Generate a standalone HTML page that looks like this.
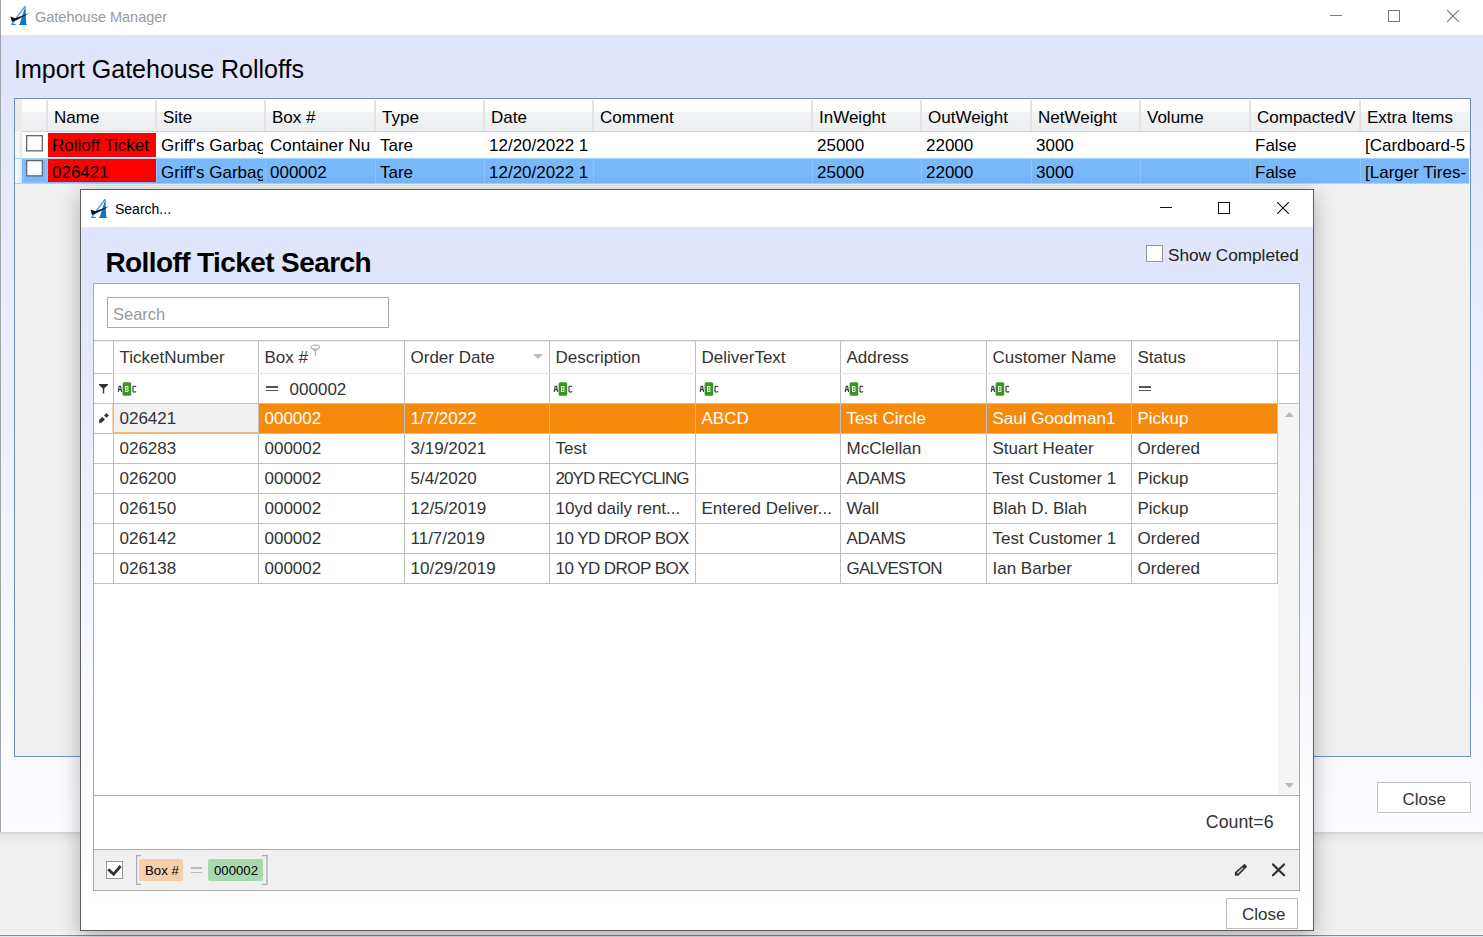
<!DOCTYPE html>
<html><head><meta charset="utf-8"><style>
html,body{margin:0;padding:0;width:1483px;height:937px;overflow:hidden;font-family:"Liberation Sans", sans-serif;}
div{box-sizing:content-box}
</style></head><body>
<div style="position:absolute;left:0;top:0;width:1483px;height:937px;background:#f0f0f0;overflow:hidden"><div style="position:absolute;left:0px;top:934px;width:1483px;height:1px;background:#f8f6f2"></div><div style="position:absolute;left:0px;top:935px;width:1483px;height:1px;background:#6e8db5"></div><div style="position:absolute;left:0px;top:936px;width:1483px;height:1px;background:#dce8f8"></div><div style="position:absolute;left:0px;top:832px;width:1483px;height:12px;background:linear-gradient(#d2d2d2,#e6e6e6 30%,#f0f0f0)"></div><div style="position:absolute;left:0px;top:0px;width:1483px;height:832px;background:linear-gradient(#e0e5fb 0px, #e0e5fb 60px, #fdfdff 832px);"></div><div style="position:absolute;left:0px;top:0px;width:1483px;height:35px;background:#fff"></div><div style="position:absolute;left:0px;top:0px;width:1px;height:832px;background:#a0a4aa"></div><svg style="position:absolute;left:0px;top:0px;overflow:visible" width="32" height="30" viewBox="0 0 32 30">
<path d="M25.4 5.8 L26.2 23.6 L27.3 24.9 L18.6 24.9 L19.9 23.6 Z" fill="#0b78d0"/>
<path d="M25.2 6.2 L11.8 24.2" stroke="#3a9ae0" stroke-width="1.3" fill="none"/>
<path d="M10.6 24.9 L16.2 24.9 L15.4 23.7 L11.9 23.7 Z" fill="#2a8ad8"/>
<path d="M10.4 16.6 L15.2 18.2 L29.6 12.9 L17.5 19.8 L12 21.9 Z" fill="#111"/>
</svg><div style="position:absolute;left:35px;top:9.53px;font-size:14.5px;line-height:14.5px;color:#999;font-weight:400;white-space:nowrap;">Gatehouse Manager</div><div style="position:absolute;left:1330px;top:15px;width:12px;height:1px;background:#777"></div><div style="position:absolute;left:1388px;top:10px;width:12px;height:12px;border:1px solid #777;box-sizing:border-box"></div><svg style="position:absolute;left:1447px;top:10px" width="12" height="12"><path d="M0 0L12 12M12 0L0 12" stroke="#777" stroke-width="1.1"/></svg><div style="position:absolute;left:14px;top:56.64px;font-size:25px;line-height:25px;color:#000;font-weight:400;white-space:nowrap;">Import Gatehouse Rolloffs</div><div style="position:absolute;left:14px;top:98px;width:1457px;height:659px;border:1px solid #6f8fb8;box-sizing:border-box;background:#f0f0f0"></div><div style="position:absolute;left:15px;top:99px;width:1455px;height:32px;background:linear-gradient(#fff 0px,#fff 13px,#f2f3f5 13px,#eceef0 32px)"></div><div style="position:absolute;left:22px;top:131px;width:1448px;height:1px;background:#d0d0d0"></div><div style="position:absolute;left:15px;top:99px;width:7px;height:32px;background:#ececec"></div><div style="position:absolute;left:46px;top:100px;width:2px;height:31px;background:linear-gradient(90deg,#e8e8ea,#dcdcde)"></div><div style="position:absolute;left:155px;top:100px;width:2px;height:31px;background:linear-gradient(90deg,#e8e8ea,#dcdcde)"></div><div style="position:absolute;left:264px;top:100px;width:2px;height:31px;background:linear-gradient(90deg,#e8e8ea,#dcdcde)"></div><div style="position:absolute;left:374px;top:100px;width:2px;height:31px;background:linear-gradient(90deg,#e8e8ea,#dcdcde)"></div><div style="position:absolute;left:483px;top:100px;width:2px;height:31px;background:linear-gradient(90deg,#e8e8ea,#dcdcde)"></div><div style="position:absolute;left:592px;top:100px;width:2px;height:31px;background:linear-gradient(90deg,#e8e8ea,#dcdcde)"></div><div style="position:absolute;left:811px;top:100px;width:2px;height:31px;background:linear-gradient(90deg,#e8e8ea,#dcdcde)"></div><div style="position:absolute;left:920px;top:100px;width:2px;height:31px;background:linear-gradient(90deg,#e8e8ea,#dcdcde)"></div><div style="position:absolute;left:1030px;top:100px;width:2px;height:31px;background:linear-gradient(90deg,#e8e8ea,#dcdcde)"></div><div style="position:absolute;left:1139px;top:100px;width:2px;height:31px;background:linear-gradient(90deg,#e8e8ea,#dcdcde)"></div><div style="position:absolute;left:1249px;top:100px;width:2px;height:31px;background:linear-gradient(90deg,#e8e8ea,#dcdcde)"></div><div style="position:absolute;left:1359px;top:100px;width:2px;height:31px;background:linear-gradient(90deg,#e8e8ea,#dcdcde)"></div><div style="position:absolute;left:54px;top:108.61px;font-size:17px;line-height:17px;color:#000;font-weight:400;white-space:nowrap;width:101px;overflow:hidden;">Name</div><div style="position:absolute;left:163px;top:108.61px;font-size:17px;line-height:17px;color:#000;font-weight:400;white-space:nowrap;width:101px;overflow:hidden;">Site</div><div style="position:absolute;left:272px;top:108.61px;font-size:17px;line-height:17px;color:#000;font-weight:400;white-space:nowrap;width:102px;overflow:hidden;">Box #</div><div style="position:absolute;left:382px;top:108.61px;font-size:17px;line-height:17px;color:#000;font-weight:400;white-space:nowrap;width:101px;overflow:hidden;">Type</div><div style="position:absolute;left:491px;top:108.61px;font-size:17px;line-height:17px;color:#000;font-weight:400;white-space:nowrap;width:101px;overflow:hidden;">Date</div><div style="position:absolute;left:600px;top:108.61px;font-size:17px;line-height:17px;color:#000;font-weight:400;white-space:nowrap;width:211px;overflow:hidden;">Comment</div><div style="position:absolute;left:819px;top:108.61px;font-size:17px;line-height:17px;color:#000;font-weight:400;white-space:nowrap;width:101px;overflow:hidden;">InWeight</div><div style="position:absolute;left:928px;top:108.61px;font-size:17px;line-height:17px;color:#000;font-weight:400;white-space:nowrap;width:102px;overflow:hidden;">OutWeight</div><div style="position:absolute;left:1038px;top:108.61px;font-size:17px;line-height:17px;color:#000;font-weight:400;white-space:nowrap;width:101px;overflow:hidden;">NetWeight</div><div style="position:absolute;left:1147px;top:108.61px;font-size:17px;line-height:17px;color:#000;font-weight:400;white-space:nowrap;width:102px;overflow:hidden;">Volume</div><div style="position:absolute;left:1257px;top:108.61px;font-size:17px;line-height:17px;color:#000;font-weight:400;white-space:nowrap;width:102px;overflow:hidden;">CompactedV</div><div style="position:absolute;left:1367px;top:108.61px;font-size:17px;line-height:17px;color:#000;font-weight:400;white-space:nowrap;width:101px;overflow:hidden;">Extra Items</div><div style="position:absolute;left:15px;top:132px;width:1454px;height:26px;background:#fff"></div><div style="position:absolute;left:15px;top:132px;width:7px;height:26px;background:linear-gradient(90deg,#fafafa,#f2f2f2 70%,#e4e4e4)"></div><div style="position:absolute;left:48px;top:133px;width:108px;height:24px;background:#ff0000"></div><svg style="position:absolute;left:26px;top:135px" width="17" height="17"><rect x="0.65" y="0.65" width="15.7" height="15.2" fill="#fff" stroke="#666" stroke-width="1.3"/></svg><div style="position:absolute;left:52px;top:136.61px;font-size:17px;line-height:17px;color:#000;font-weight:400;white-space:nowrap;width:102px;overflow:hidden;">Rolloff Ticket</div><div style="position:absolute;left:161px;top:136.61px;font-size:17px;line-height:17px;color:#000;font-weight:400;white-space:nowrap;width:102px;overflow:hidden;">Griff's Garbage</div><div style="position:absolute;left:270px;top:136.61px;font-size:17px;line-height:17px;color:#000;font-weight:400;white-space:nowrap;width:103px;overflow:hidden;">Container Nu</div><div style="position:absolute;left:380px;top:136.61px;font-size:17px;line-height:17px;color:#000;font-weight:400;white-space:nowrap;width:102px;overflow:hidden;">Tare</div><div style="position:absolute;left:489px;top:136.61px;font-size:17px;line-height:17px;color:#000;font-weight:400;white-space:nowrap;width:102px;overflow:hidden;">12/20/2022 1</div><div style="position:absolute;left:817px;top:136.61px;font-size:17px;line-height:17px;color:#000;font-weight:400;white-space:nowrap;width:102px;overflow:hidden;">25000</div><div style="position:absolute;left:926px;top:136.61px;font-size:17px;line-height:17px;color:#000;font-weight:400;white-space:nowrap;width:103px;overflow:hidden;">22000</div><div style="position:absolute;left:1036px;top:136.61px;font-size:17px;line-height:17px;color:#000;font-weight:400;white-space:nowrap;width:102px;overflow:hidden;">3000</div><div style="position:absolute;left:1255px;top:136.61px;font-size:17px;line-height:17px;color:#000;font-weight:400;white-space:nowrap;width:103px;overflow:hidden;">False</div><div style="position:absolute;left:1365px;top:136.61px;font-size:17px;line-height:17px;color:#000;font-weight:400;white-space:nowrap;width:102px;overflow:hidden;">[Cardboard-5</div><div style="position:absolute;left:15px;top:158px;width:1454px;height:26px;background:#78b8fb"></div><div style="position:absolute;left:15px;top:158px;width:7px;height:26px;background:linear-gradient(90deg,#fafdff,#e6f2fb 70%,#cde6f8)"></div><div style="position:absolute;left:15px;top:158px;width:1454px;height:1px;background:#a6d2fb"></div><div style="position:absolute;left:15px;top:183px;width:1454px;height:1px;background:#a6d2fb"></div><div style="position:absolute;left:47px;top:159px;width:1px;height:24px;background:#8ec3fb"></div><div style="position:absolute;left:156px;top:159px;width:1px;height:24px;background:#8ec3fb"></div><div style="position:absolute;left:265px;top:159px;width:1px;height:24px;background:#8ec3fb"></div><div style="position:absolute;left:375px;top:159px;width:1px;height:24px;background:#8ec3fb"></div><div style="position:absolute;left:484px;top:159px;width:1px;height:24px;background:#8ec3fb"></div><div style="position:absolute;left:593px;top:159px;width:1px;height:24px;background:#8ec3fb"></div><div style="position:absolute;left:812px;top:159px;width:1px;height:24px;background:#8ec3fb"></div><div style="position:absolute;left:921px;top:159px;width:1px;height:24px;background:#8ec3fb"></div><div style="position:absolute;left:1031px;top:159px;width:1px;height:24px;background:#8ec3fb"></div><div style="position:absolute;left:1140px;top:159px;width:1px;height:24px;background:#8ec3fb"></div><div style="position:absolute;left:1250px;top:159px;width:1px;height:24px;background:#8ec3fb"></div><div style="position:absolute;left:1360px;top:159px;width:1px;height:24px;background:#8ec3fb"></div><div style="position:absolute;left:23px;top:159px;width:23px;height:24px;border:1px solid #8ec3fb;box-sizing:border-box"></div><div style="position:absolute;left:48px;top:159px;width:108px;height:23px;background:#ff0000"></div><svg style="position:absolute;left:26px;top:160px" width="17" height="17"><rect x="0.65" y="0.65" width="15.7" height="15.2" fill="#fff" stroke="#666" stroke-width="1.3"/></svg><div style="position:absolute;left:52px;top:163.61px;font-size:17px;line-height:17px;color:#000;font-weight:400;white-space:nowrap;width:102px;overflow:hidden;">026421</div><div style="position:absolute;left:161px;top:163.61px;font-size:17px;line-height:17px;color:#000;font-weight:400;white-space:nowrap;width:102px;overflow:hidden;">Griff's Garbage</div><div style="position:absolute;left:270px;top:163.61px;font-size:17px;line-height:17px;color:#000;font-weight:400;white-space:nowrap;width:103px;overflow:hidden;">000002</div><div style="position:absolute;left:380px;top:163.61px;font-size:17px;line-height:17px;color:#000;font-weight:400;white-space:nowrap;width:102px;overflow:hidden;">Tare</div><div style="position:absolute;left:489px;top:163.61px;font-size:17px;line-height:17px;color:#000;font-weight:400;white-space:nowrap;width:102px;overflow:hidden;">12/20/2022 1</div><div style="position:absolute;left:817px;top:163.61px;font-size:17px;line-height:17px;color:#000;font-weight:400;white-space:nowrap;width:102px;overflow:hidden;">25000</div><div style="position:absolute;left:926px;top:163.61px;font-size:17px;line-height:17px;color:#000;font-weight:400;white-space:nowrap;width:103px;overflow:hidden;">22000</div><div style="position:absolute;left:1036px;top:163.61px;font-size:17px;line-height:17px;color:#000;font-weight:400;white-space:nowrap;width:102px;overflow:hidden;">3000</div><div style="position:absolute;left:1255px;top:163.61px;font-size:17px;line-height:17px;color:#000;font-weight:400;white-space:nowrap;width:103px;overflow:hidden;">False</div><div style="position:absolute;left:1365px;top:163.61px;font-size:17px;line-height:17px;color:#000;font-weight:400;white-space:nowrap;width:102px;overflow:hidden;">[Larger Tires-</div><div style="position:absolute;left:1377px;top:782px;width:94px;height:31px;border:1px solid #c4c4c4;box-sizing:border-box;background:#fff"></div><div style="position:absolute;left:1402.5px;top:790.61px;font-size:17px;line-height:17px;color:#333;font-weight:400;white-space:nowrap;">Close</div><div style="position:absolute;left:68px;top:180px;width:1262px;height:766px;background:transparent;box-shadow:0 6px 20px rgba(0,0,0,0.28);left:80px;top:189px;width:1234px;height:742px"></div><div style="position:absolute;left:80px;top:189px;width:1234px;height:742px;border:1px solid #5c5c5c;box-sizing:border-box;background:linear-gradient(#e0e5fb 0px, #e0e5fb 80px, #fdfdff 600px, #fff 742px)"></div><div style="position:absolute;left:81px;top:190px;width:1232px;height:37px;background:#fff"></div><svg style="position:absolute;left:80px;top:193px;overflow:visible" width="32" height="30" viewBox="0 0 32 30">
<path d="M25.4 5.8 L26.2 23.6 L27.3 24.9 L18.6 24.9 L19.9 23.6 Z" fill="#0b78d0"/>
<path d="M25.2 6.2 L11.8 24.2" stroke="#3a9ae0" stroke-width="1.3" fill="none"/>
<path d="M10.6 24.9 L16.2 24.9 L15.4 23.7 L11.9 23.7 Z" fill="#2a8ad8"/>
<path d="M10.4 16.6 L15.2 18.2 L29.6 12.9 L17.5 19.8 L12 21.9 Z" fill="#111"/>
</svg><div style="position:absolute;left:115px;top:202.15px;font-size:14px;line-height:14px;color:#000;font-weight:400;white-space:nowrap;">Search...</div><div style="position:absolute;left:1160px;top:207px;width:12px;height:1px;background:#111"></div><div style="position:absolute;left:1218px;top:202px;width:12px;height:12px;border:1px solid #111;box-sizing:border-box"></div><svg style="position:absolute;left:1277px;top:202px" width="12" height="12"><path d="M0 0L12 12M12 0L0 12" stroke="#111" stroke-width="1.1"/></svg><div style="position:absolute;left:105.5px;top:249.30px;font-size:28px;line-height:28px;color:#000;font-weight:700;white-space:nowrap;letter-spacing:-0.6px;">Rolloff Ticket Search</div><div style="position:absolute;left:1146px;top:245px;width:17px;height:17px;border:1px solid #999;box-sizing:border-box;background:#fff"></div><div style="position:absolute;left:1168px;top:247.14px;font-size:17.2px;line-height:17.2px;color:#222;font-weight:400;white-space:nowrap;">Show Completed</div><div style="position:absolute;left:93px;top:283px;width:1207px;height:608px;border:1px solid #ababab;box-sizing:border-box;background:#fff"></div><div style="position:absolute;left:107px;top:297px;width:282px;height:31px;border:1px solid #ababab;box-sizing:border-box;background:#fff"></div><div style="position:absolute;left:113px;top:306.03px;font-size:16.5px;line-height:16.5px;color:#999;font-weight:400;white-space:nowrap;">Search</div><div style="position:absolute;left:94px;top:340px;width:1205px;height:1px;background:#c6c6c6"></div><div style="position:absolute;left:94px;top:341px;width:1205px;height:1px;background:#ececec"></div><div style="position:absolute;left:258px;top:404px;width:1019px;height:29px;background:#f58a0d"></div><div style="position:absolute;left:114px;top:404px;width:144px;height:29px;background:#f1f1f1"></div><div style="position:absolute;left:113px;top:341px;width:1px;height:242px;background:#bfbfbf"></div><div style="position:absolute;left:258px;top:341px;width:1px;height:242px;background:#bfbfbf"></div><div style="position:absolute;left:404px;top:341px;width:1px;height:242px;background:#bfbfbf"></div><div style="position:absolute;left:549px;top:341px;width:1px;height:242px;background:#bfbfbf"></div><div style="position:absolute;left:695px;top:341px;width:1px;height:242px;background:#bfbfbf"></div><div style="position:absolute;left:840px;top:341px;width:1px;height:242px;background:#bfbfbf"></div><div style="position:absolute;left:986px;top:341px;width:1px;height:242px;background:#bfbfbf"></div><div style="position:absolute;left:1131px;top:341px;width:1px;height:242px;background:#bfbfbf"></div><div style="position:absolute;left:1277px;top:341px;width:1px;height:242px;background:#bfbfbf"></div><div style="position:absolute;left:94px;top:373px;width:1205px;height:1px;background:#e6e6e6"></div><div style="position:absolute;left:94px;top:373px;width:19px;height:1px;background:#c0c0c0"></div><div style="position:absolute;left:1277px;top:373px;width:22px;height:1px;background:#c0c0c0"></div><div style="position:absolute;left:94px;top:403px;width:1205px;height:1px;background:#c0c0c0"></div><div style="position:absolute;left:1278px;top:404px;width:21px;height:391px;background:#f5f5f5"></div><svg style="position:absolute;left:1285px;top:412px" width="9" height="5"><path d="M0 5L4.5 0L9 5Z" fill="#bbb"/></svg><svg style="position:absolute;left:1285px;top:783px" width="9" height="5"><path d="M0 0L4.5 5L9 0Z" fill="#bbb"/></svg><div style="position:absolute;left:119.5px;top:349.01px;font-size:17px;line-height:17px;color:#333;font-weight:400;white-space:nowrap;">TicketNumber</div><div style="position:absolute;left:264.5px;top:349.01px;font-size:17px;line-height:17px;color:#333;font-weight:400;white-space:nowrap;">Box #</div><div style="position:absolute;left:410.5px;top:349.01px;font-size:17px;line-height:17px;color:#333;font-weight:400;white-space:nowrap;">Order Date</div><div style="position:absolute;left:555.5px;top:349.01px;font-size:17px;line-height:17px;color:#333;font-weight:400;white-space:nowrap;">Description</div><div style="position:absolute;left:701.5px;top:349.01px;font-size:17px;line-height:17px;color:#333;font-weight:400;white-space:nowrap;">DeliverText</div><div style="position:absolute;left:846.5px;top:349.01px;font-size:17px;line-height:17px;color:#333;font-weight:400;white-space:nowrap;">Address</div><div style="position:absolute;left:992.5px;top:349.01px;font-size:17px;line-height:17px;color:#333;font-weight:400;white-space:nowrap;">Customer Name</div><div style="position:absolute;left:1137.5px;top:349.01px;font-size:17px;line-height:17px;color:#333;font-weight:400;white-space:nowrap;">Status</div><svg style="position:absolute;left:310px;top:344px" width="11" height="13" viewBox="0 0 11 13"><ellipse cx="5.3" cy="3.2" rx="4.2" ry="2" fill="none" stroke="#b3b3b3" stroke-width="1.2"/><path d="M1.3 4 L5.3 8 L9.3 4 Q5.3 6.5 1.3 4Z" fill="#b3b3b3"/><rect x="4.7" y="7" width="1.2" height="4.8" fill="#b3b3b3"/></svg><svg style="position:absolute;left:533px;top:354px" width="10" height="5"><path d="M0 0L5 5L10 0Z" fill="#bbb"/></svg><svg style="position:absolute;left:99px;top:383.5px" width="9" height="10"><path d="M0 0H9V1L5.2 4.6V9.5H3.8V4.6L0 1Z" fill="#333"/></svg><svg style="position:absolute;left:117px;top:382px" width="20" height="14" viewBox="0 0 20 14">
<path d="M1.2 10 L2.2 4.3 L3.6 4.3 L4.6 10 M1.6 7.6 H4.2" fill="none" stroke="#333" stroke-width="1.1"/>
<rect x="5.6" y="0.2" width="8.6" height="13.5" rx="1.5" fill="#3a9422"/>
<path d="M8 4 H10.8 L11.6 4.8 V6.2 L10.8 7 L11.6 7.8 V9.2 L10.8 10 H8 Z M9 5 V6.5 H10.5 V5 Z M9 7.5 V9 H10.5 V7.5 Z" fill="#fff" fill-opacity="0.9"/>
<path d="M19 4.8 L18.4 4.3 H16.6 L16 4.8 V9.4 L16.6 10 H18.4 L19 9.4" fill="none" stroke="#333" stroke-width="1.1"/>
</svg><svg style="position:absolute;left:553px;top:382px" width="20" height="14" viewBox="0 0 20 14">
<path d="M1.2 10 L2.2 4.3 L3.6 4.3 L4.6 10 M1.6 7.6 H4.2" fill="none" stroke="#333" stroke-width="1.1"/>
<rect x="5.6" y="0.2" width="8.6" height="13.5" rx="1.5" fill="#3a9422"/>
<path d="M8 4 H10.8 L11.6 4.8 V6.2 L10.8 7 L11.6 7.8 V9.2 L10.8 10 H8 Z M9 5 V6.5 H10.5 V5 Z M9 7.5 V9 H10.5 V7.5 Z" fill="#fff" fill-opacity="0.9"/>
<path d="M19 4.8 L18.4 4.3 H16.6 L16 4.8 V9.4 L16.6 10 H18.4 L19 9.4" fill="none" stroke="#333" stroke-width="1.1"/>
</svg><svg style="position:absolute;left:699px;top:382px" width="20" height="14" viewBox="0 0 20 14">
<path d="M1.2 10 L2.2 4.3 L3.6 4.3 L4.6 10 M1.6 7.6 H4.2" fill="none" stroke="#333" stroke-width="1.1"/>
<rect x="5.6" y="0.2" width="8.6" height="13.5" rx="1.5" fill="#3a9422"/>
<path d="M8 4 H10.8 L11.6 4.8 V6.2 L10.8 7 L11.6 7.8 V9.2 L10.8 10 H8 Z M9 5 V6.5 H10.5 V5 Z M9 7.5 V9 H10.5 V7.5 Z" fill="#fff" fill-opacity="0.9"/>
<path d="M19 4.8 L18.4 4.3 H16.6 L16 4.8 V9.4 L16.6 10 H18.4 L19 9.4" fill="none" stroke="#333" stroke-width="1.1"/>
</svg><svg style="position:absolute;left:844px;top:382px" width="20" height="14" viewBox="0 0 20 14">
<path d="M1.2 10 L2.2 4.3 L3.6 4.3 L4.6 10 M1.6 7.6 H4.2" fill="none" stroke="#333" stroke-width="1.1"/>
<rect x="5.6" y="0.2" width="8.6" height="13.5" rx="1.5" fill="#3a9422"/>
<path d="M8 4 H10.8 L11.6 4.8 V6.2 L10.8 7 L11.6 7.8 V9.2 L10.8 10 H8 Z M9 5 V6.5 H10.5 V5 Z M9 7.5 V9 H10.5 V7.5 Z" fill="#fff" fill-opacity="0.9"/>
<path d="M19 4.8 L18.4 4.3 H16.6 L16 4.8 V9.4 L16.6 10 H18.4 L19 9.4" fill="none" stroke="#333" stroke-width="1.1"/>
</svg><svg style="position:absolute;left:990px;top:382px" width="20" height="14" viewBox="0 0 20 14">
<path d="M1.2 10 L2.2 4.3 L3.6 4.3 L4.6 10 M1.6 7.6 H4.2" fill="none" stroke="#333" stroke-width="1.1"/>
<rect x="5.6" y="0.2" width="8.6" height="13.5" rx="1.5" fill="#3a9422"/>
<path d="M8 4 H10.8 L11.6 4.8 V6.2 L10.8 7 L11.6 7.8 V9.2 L10.8 10 H8 Z M9 5 V6.5 H10.5 V5 Z M9 7.5 V9 H10.5 V7.5 Z" fill="#fff" fill-opacity="0.9"/>
<path d="M19 4.8 L18.4 4.3 H16.6 L16 4.8 V9.4 L16.6 10 H18.4 L19 9.4" fill="none" stroke="#333" stroke-width="1.1"/>
</svg><div style="position:absolute;left:266px;top:386px;width:12px;height:1.6px;background:#555"></div><div style="position:absolute;left:266px;top:389.6px;width:12px;height:1.6px;background:#555"></div><div style="position:absolute;left:289.6px;top:380.61px;font-size:17px;line-height:17px;color:#333;font-weight:400;white-space:nowrap;">000002</div><div style="position:absolute;left:1139px;top:386px;width:12px;height:1.6px;background:#555"></div><div style="position:absolute;left:1139px;top:389.6px;width:12px;height:1.6px;background:#555"></div><div style="position:absolute;left:113px;top:432px;width:145px;height:1px;background:#f6b77a"></div><div style="position:absolute;left:112px;top:404px;width:1px;height:29px;background:#fbd7b0"></div><svg style="position:absolute;left:94px;top:408px" width="20" height="20" viewBox="0 0 20 20"><path d="M5.1 12 L8.5 9 L11 11.3 L7.5 14.7 L5.1 14.7 Z" fill="#2f3235"/><path d="M12.5 4.9 L14.9 7.4 L12.5 9.8 L10 7.4 Z" fill="#2f3235"/></svg><div style="position:absolute;left:94px;top:433px;width:1184px;height:1px;background:#c0c0c0"></div><div style="position:absolute;left:119.5px;top:410.21px;font-size:17px;line-height:17px;color:#333;font-weight:400;white-space:nowrap;">026421</div><div style="position:absolute;left:264.5px;top:410.21px;font-size:17px;line-height:17px;color:#fff;font-weight:400;white-space:nowrap;">000002</div><div style="position:absolute;left:410.5px;top:410.21px;font-size:17px;line-height:17px;color:#fff;font-weight:400;white-space:nowrap;">1/7/2022</div><div style="position:absolute;left:701.5px;top:410.21px;font-size:17px;line-height:17px;color:#fff;font-weight:400;white-space:nowrap;">ABCD</div><div style="position:absolute;left:846.5px;top:410.21px;font-size:17px;line-height:17px;color:#fff;font-weight:400;white-space:nowrap;">Test Circle</div><div style="position:absolute;left:992.5px;top:410.21px;font-size:17px;line-height:17px;color:#fff;font-weight:400;white-space:nowrap;">Saul Goodman1</div><div style="position:absolute;left:1137.5px;top:410.21px;font-size:17px;line-height:17px;color:#fff;font-weight:400;white-space:nowrap;">Pickup</div><div style="position:absolute;left:94px;top:463px;width:1184px;height:1px;background:#c0c0c0"></div><div style="position:absolute;left:119.5px;top:440.21px;font-size:17px;line-height:17px;color:#333;font-weight:400;white-space:nowrap;">026283</div><div style="position:absolute;left:264.5px;top:440.21px;font-size:17px;line-height:17px;color:#333;font-weight:400;white-space:nowrap;">000002</div><div style="position:absolute;left:410.5px;top:440.21px;font-size:17px;line-height:17px;color:#333;font-weight:400;white-space:nowrap;">3/19/2021</div><div style="position:absolute;left:555.5px;top:440.21px;font-size:17px;line-height:17px;color:#333;font-weight:400;white-space:nowrap;">Test</div><div style="position:absolute;left:846.5px;top:440.21px;font-size:17px;line-height:17px;color:#333;font-weight:400;white-space:nowrap;">McClellan</div><div style="position:absolute;left:992.5px;top:440.21px;font-size:17px;line-height:17px;color:#333;font-weight:400;white-space:nowrap;">Stuart Heater</div><div style="position:absolute;left:1137.5px;top:440.21px;font-size:17px;line-height:17px;color:#333;font-weight:400;white-space:nowrap;">Ordered</div><div style="position:absolute;left:94px;top:493px;width:1184px;height:1px;background:#c0c0c0"></div><div style="position:absolute;left:119.5px;top:470.21px;font-size:17px;line-height:17px;color:#333;font-weight:400;white-space:nowrap;">026200</div><div style="position:absolute;left:264.5px;top:470.21px;font-size:17px;line-height:17px;color:#333;font-weight:400;white-space:nowrap;">000002</div><div style="position:absolute;left:410.5px;top:470.21px;font-size:17px;line-height:17px;color:#333;font-weight:400;white-space:nowrap;">5/4/2020</div><div style="position:absolute;left:555.5px;top:470.21px;font-size:17px;line-height:17px;color:#333;font-weight:400;white-space:nowrap;letter-spacing:-0.95px;">20YD RECYCLING</div><div style="position:absolute;left:846.5px;top:470.21px;font-size:17px;line-height:17px;color:#333;font-weight:400;white-space:nowrap;letter-spacing:-0.3px;">ADAMS</div><div style="position:absolute;left:992.5px;top:470.21px;font-size:17px;line-height:17px;color:#333;font-weight:400;white-space:nowrap;">Test Customer 1</div><div style="position:absolute;left:1137.5px;top:470.21px;font-size:17px;line-height:17px;color:#333;font-weight:400;white-space:nowrap;">Pickup</div><div style="position:absolute;left:94px;top:523px;width:1184px;height:1px;background:#c0c0c0"></div><div style="position:absolute;left:119.5px;top:500.21px;font-size:17px;line-height:17px;color:#333;font-weight:400;white-space:nowrap;">026150</div><div style="position:absolute;left:264.5px;top:500.21px;font-size:17px;line-height:17px;color:#333;font-weight:400;white-space:nowrap;">000002</div><div style="position:absolute;left:410.5px;top:500.21px;font-size:17px;line-height:17px;color:#333;font-weight:400;white-space:nowrap;">12/5/2019</div><div style="position:absolute;left:555.5px;top:500.21px;font-size:17px;line-height:17px;color:#333;font-weight:400;white-space:nowrap;">10yd daily rent...</div><div style="position:absolute;left:701.5px;top:500.21px;font-size:17px;line-height:17px;color:#333;font-weight:400;white-space:nowrap;">Entered Deliver...</div><div style="position:absolute;left:846.5px;top:500.21px;font-size:17px;line-height:17px;color:#333;font-weight:400;white-space:nowrap;">Wall</div><div style="position:absolute;left:992.5px;top:500.21px;font-size:17px;line-height:17px;color:#333;font-weight:400;white-space:nowrap;">Blah D. Blah</div><div style="position:absolute;left:1137.5px;top:500.21px;font-size:17px;line-height:17px;color:#333;font-weight:400;white-space:nowrap;">Pickup</div><div style="position:absolute;left:94px;top:553px;width:1184px;height:1px;background:#c0c0c0"></div><div style="position:absolute;left:119.5px;top:530.21px;font-size:17px;line-height:17px;color:#333;font-weight:400;white-space:nowrap;">026142</div><div style="position:absolute;left:264.5px;top:530.21px;font-size:17px;line-height:17px;color:#333;font-weight:400;white-space:nowrap;">000002</div><div style="position:absolute;left:410.5px;top:530.21px;font-size:17px;line-height:17px;color:#333;font-weight:400;white-space:nowrap;">11/7/2019</div><div style="position:absolute;left:555.5px;top:530.21px;font-size:17px;line-height:17px;color:#333;font-weight:400;white-space:nowrap;letter-spacing:-0.55px;">10 YD DROP BOX</div><div style="position:absolute;left:846.5px;top:530.21px;font-size:17px;line-height:17px;color:#333;font-weight:400;white-space:nowrap;letter-spacing:-0.3px;">ADAMS</div><div style="position:absolute;left:992.5px;top:530.21px;font-size:17px;line-height:17px;color:#333;font-weight:400;white-space:nowrap;">Test Customer 1</div><div style="position:absolute;left:1137.5px;top:530.21px;font-size:17px;line-height:17px;color:#333;font-weight:400;white-space:nowrap;">Ordered</div><div style="position:absolute;left:94px;top:583px;width:1184px;height:1px;background:#c0c0c0"></div><div style="position:absolute;left:119.5px;top:560.21px;font-size:17px;line-height:17px;color:#333;font-weight:400;white-space:nowrap;">026138</div><div style="position:absolute;left:264.5px;top:560.21px;font-size:17px;line-height:17px;color:#333;font-weight:400;white-space:nowrap;">000002</div><div style="position:absolute;left:410.5px;top:560.21px;font-size:17px;line-height:17px;color:#333;font-weight:400;white-space:nowrap;">10/29/2019</div><div style="position:absolute;left:555.5px;top:560.21px;font-size:17px;line-height:17px;color:#333;font-weight:400;white-space:nowrap;letter-spacing:-0.55px;">10 YD DROP BOX</div><div style="position:absolute;left:846.5px;top:560.21px;font-size:17px;line-height:17px;color:#333;font-weight:400;white-space:nowrap;letter-spacing:-0.8px;">GALVESTON</div><div style="position:absolute;left:992.5px;top:560.21px;font-size:17px;line-height:17px;color:#333;font-weight:400;white-space:nowrap;">Ian Barber</div><div style="position:absolute;left:1137.5px;top:560.21px;font-size:17px;line-height:17px;color:#333;font-weight:400;white-space:nowrap;">Ordered</div><div style="position:absolute;left:94px;top:795px;width:1205px;height:1px;background:#ababab"></div><div style="position:absolute;left:1205.8px;top:814.33px;font-size:17.8px;line-height:17.8px;color:#333;font-weight:400;white-space:nowrap;">Count=6</div><div style="position:absolute;left:94px;top:849px;width:1205px;height:41px;background:#f0f0f0;border-top:1px solid #ababab;box-sizing:border-box"></div><div style="position:absolute;left:106px;top:861px;width:17px;height:18px;border:1px solid #999;box-sizing:border-box;background:#fff"></div><svg style="position:absolute;left:107px;top:863px" width="15" height="14"><path d="M1.2 6.2L6.6 11.3L13.6 3" fill="none" stroke="#303336" stroke-width="2.8"/></svg><svg style="position:absolute;left:136px;top:855px" width="6" height="30"><path d="M5 0.5H0.5V29.5H5" fill="none" stroke="#aaa" stroke-width="1.3"/></svg><svg style="position:absolute;left:262px;top:855px" width="6" height="30"><path d="M0 0.5H5V29.5H0" fill="none" stroke="#aaa" stroke-width="1.3"/></svg><div style="position:absolute;left:139px;top:859px;width:44px;height:22px;background:#f5cfab;border-radius:2px"></div><div style="position:absolute;left:145px;top:864.33px;font-size:13.2px;line-height:13.2px;color:#000;font-weight:400;white-space:nowrap;">Box #</div><div style="position:absolute;left:191px;top:867px;width:11px;height:1.5px;background:#bbb"></div><div style="position:absolute;left:191px;top:871.5px;width:11px;height:1.5px;background:#bbb"></div><div style="position:absolute;left:208px;top:859px;width:55px;height:22px;background:#a8d8b0;border-radius:2px"></div><div style="position:absolute;left:214px;top:864.33px;font-size:13.2px;line-height:13.2px;color:#000;font-weight:400;white-space:nowrap;">000002</div><svg style="position:absolute;left:1228px;top:858px" width="64" height="24" viewBox="0 0 64 24"><path d="M6.9 14.2 L16.6 5.8 L19.2 8.4 L10.4 17.7 L6.9 17.7 Z" fill="#303336"/><path d="M9.4 15.3 L15 9.9" stroke="#f0f0f0" stroke-width="1.2"/><path d="M45 6.5 L56 17.3 M56 6.5 L45 17.3" stroke="#303336" stroke-width="2.3" stroke-linecap="round"/></svg><div style="position:absolute;left:1226px;top:898px;width:72px;height:31px;border:1px solid #bdbdbd;box-sizing:border-box;background:#fff"></div><div style="position:absolute;left:1242px;top:906.31px;font-size:17px;line-height:17px;color:#333;font-weight:400;white-space:nowrap;">Close</div></div>
</body></html>
